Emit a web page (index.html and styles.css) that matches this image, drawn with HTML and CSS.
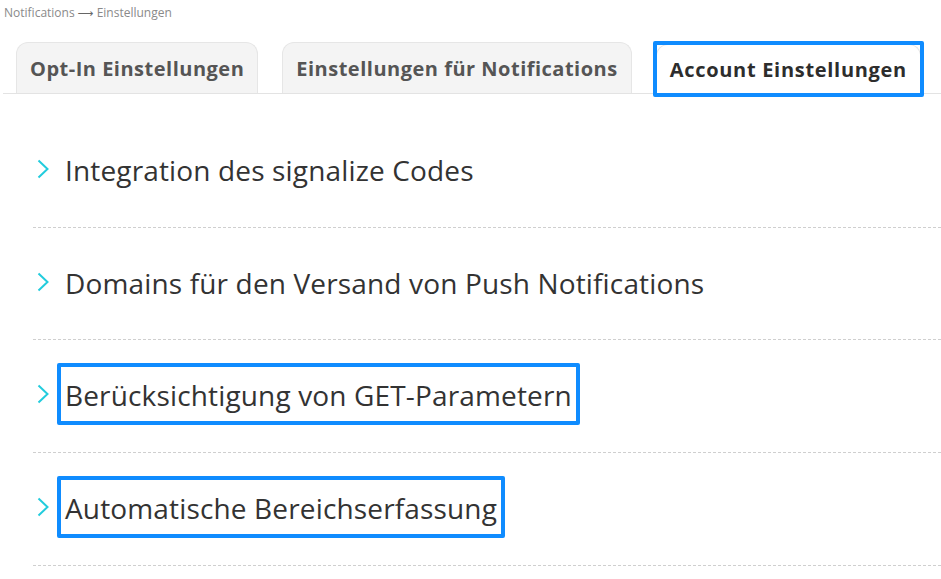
FILE: index.html
```html
<!DOCTYPE html>
<html lang="de">
<head>
    <meta charset="UTF-8">
    <meta name="viewport" content="width=device-width, initial-scale=1.0">
    <title>Einstellungen</title>
    <link rel="stylesheet" href="styles.css">
</head>
<body>
    <div class="breadcrumb">Notifications <span class="arrow">&#10230;</span> Einstellungen</div>

    <!-- Tabs -->
    <div class="tabs">
        <div class="tab">Opt-In Einstellungen</div>
        <div class="tab">Einstellungen für Notifications</div>
        <div class="tab active">Account Einstellungen</div>
    </div>

    <!-- Settings sections -->
    <div class="sections">
        <div class="section">
            <svg class="chevron" viewBox="0 0 12 20"><polyline points="1.5,1.5 10.5,10 1.5,18.5"/></svg>
            <h2 class="title">Integration des signalize Codes</h2>
        </div>
        <div class="section">
            <svg class="chevron" viewBox="0 0 12 20"><polyline points="1.5,1.5 10.5,10 1.5,18.5"/></svg>
            <h2 class="title">Domains für den Versand von Push Notifications</h2>
        </div>
        <div class="section">
            <svg class="chevron" viewBox="0 0 12 20"><polyline points="1.5,1.5 10.5,10 1.5,18.5"/></svg>
            <h2 class="title marked">Berücksichtigung von GET-Parametern</h2>
        </div>
        <div class="section">
            <svg class="chevron" viewBox="0 0 12 20"><polyline points="1.5,1.5 10.5,10 1.5,18.5"/></svg>
            <h2 class="title marked">Automatische Bereichserfassung</h2>
        </div>
    </div>
</body>
</html>
```

FILE: styles.css
```css
body {
    margin: 0;
    font-family: "Open Sans", sans-serif;
    color: #333;
    background-color: white;
}

.breadcrumb {
    padding: 4px 4px 0;
    font-size: 12px;
    color: #8a8a8a;
    height: 37px;
    box-sizing: border-box;
}

.breadcrumb .arrow {
    font-family: "DejaVu Sans", sans-serif;
    font-size: 11px;
    color: #666;
}

.tabs {
    display: flex;
    gap: 24px;
    padding-left: 13px;
    margin-left: 3px;
    border-bottom: 1px solid #e3e3e3;
}

.tabs .tab {
    position: relative;
    height: 51px;
    padding: 0 13px;
    margin-top: 5px;
    display: flex;
    align-items: center;
    font-size: 20px;
    font-weight: 700;
    letter-spacing: 0.5px;
    color: #555;
    background-color: #f4f4f4;
    border: 1px solid #e6e6e6;
    border-bottom: none;
    border-radius: 12px 12px 0 0;
    box-sizing: border-box;
}

.tabs .tab.active {
    background-color: white;
    color: #2d2d2d;
    margin-top: 7px;
    height: 49px;
    letter-spacing: 0.7px;
}

/* blue highlight box */
.tabs .tab.active::after,
.title.marked::after {
    content: "";
    position: absolute;
    inset: -4px;
    border: 4px solid #0f8cff;
    border-radius: 2px;
}

.sections {
    padding: 21px 0 0 33px;
}

.section {
    display: flex;
    align-items: center;
    height: 112.7px;
    border-bottom: 1px dashed #cfcfcf;
    box-sizing: border-box;
    padding-bottom: 4px;
}

.chevron {
    width: 12px;
    height: 20px;
    margin-left: 4px;
    fill: none;
    stroke: #22ccdd;
    stroke-width: 2;
}

.title {
    position: relative;
    margin: 0 0 0 12px;
    padding: 11px 4px 8px 4px;
    font-size: 28px;
    font-weight: 400;
    letter-spacing: 0.15px;
    color: #333;
    line-height: 35px;
}
```
